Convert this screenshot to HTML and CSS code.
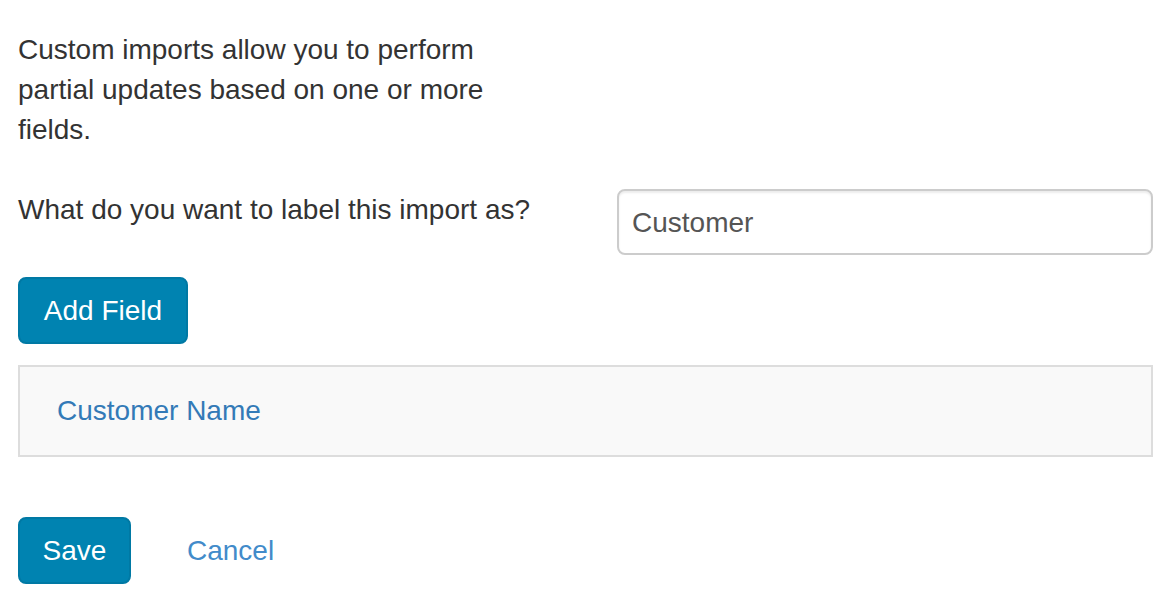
FILE: index.html
```html
<!DOCTYPE html>
<html>
<head>
<meta charset="utf-8">
<link rel="stylesheet" href="styles.css">
</head>
<body>
<div class="page">
  <p class="intro">Custom imports allow you to perform partial updates based on one or more fields.</p>
  <div class="form-row">
    <label class="form-label" for="label">What do you want to label this import as?</label>
    <input class="form-input" id="label" type="text" value="Customer">
  </div>
  <button class="btn btn-add">Add Field</button>
  <div class="panel">
    <a class="panel-link" href="#">Customer Name</a>
  </div>
  <div class="actions">
    <button class="btn btn-save">Save</button>
    <a class="cancel" href="#">Cancel</a>
  </div>
</div>
</body>
</html>
```

FILE: styles.css
```css
* { box-sizing: border-box; }
body {
  margin: 0;
  font-family: "Liberation Sans", Arial, sans-serif;
  font-size: 28px;
  line-height: 40px;
  color: #333;
  background: #fff;
}
.page {
  padding: 30px 19px 0 18px;
  display: flex;
  flex-direction: column;
  align-items: flex-start;
}
.intro {
  margin: 0;
  width: 500px;
}
.form-row {
  margin-top: 39px;
  display: flex;
  width: 100%;
  align-items: flex-start;
}
.form-label {
  width: 599px;
  flex: none;
  padding-top: 1px;
}
.form-input {
  flex: 1;
  height: 66px;
  border: 2px solid #ccc;
  border-radius: 8px;
  padding: 2px 13px 0;
  font-family: inherit;
  font-size: 28px;
  color: #555;
  box-shadow: inset 0 2px 2px rgba(0,0,0,0.075);
  outline: none;
}
.btn {
  font-family: inherit;
  font-size: 28px;
  color: #fff;
  background: #0083b1;
  border: 2px solid #0079a4;
  border-radius: 8px;
  cursor: pointer;
  padding: 0;
}
.btn-add {
  margin-top: 22px;
  width: 170px;
  height: 67px;
}
.panel {
  margin-top: 21px;
  width: 100%;
  height: 92px;
  background: #f9f9f9;
  border: 2px solid #ddd;
  padding: 0 37px;
  display: flex;
  align-items: center;
}
.panel-link {
  color: #337ab7;
  text-decoration: none;
}
.actions {
  margin-top: 60px;
  display: flex;
  align-items: center;
}
.btn-save {
  width: 113px;
  height: 67px;
}
.cancel {
  margin-left: 56px;
  color: #428bca;
  text-decoration: none;
}
```
